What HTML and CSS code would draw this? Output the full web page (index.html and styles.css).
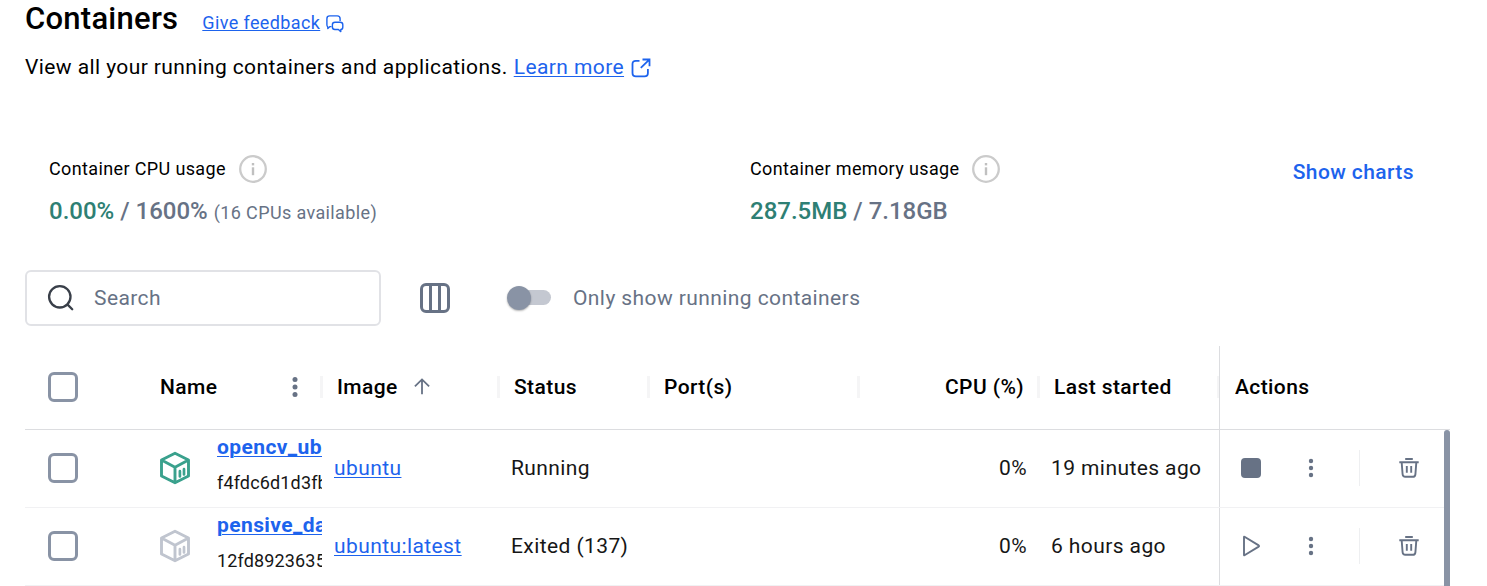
FILE: index.html
```html
<!DOCTYPE html>
<html lang="en">
<head>
<meta charset="utf-8">
<title>Containers</title>
<link rel="stylesheet" href="styles.css">
</head>
<body>
<svg class="sprite" aria-hidden="true">
  <symbol id="info" viewBox="0 0 28 28"><circle cx="14" cy="14" r="12.8" fill="none" stroke="#cbcbcb" stroke-width="2.3"/><rect x="12.8" y="12.3" width="2.4" height="7.9" fill="#c0c0c0"/><rect x="12.8" y="8" width="2.4" height="2.4" fill="#c0c0c0"/></symbol>
  <symbol id="cube" viewBox="0 0 32 34"><path d="M16 2.2 29.5 9v16L16 31.8 2.5 25V9zM2.5 9 16 16.2 29.5 9M16 16.2v15.6" fill="none" stroke="currentColor" stroke-width="2.9" stroke-linejoin="round"/><path d="M20.9 20.2v5.2M25 18.2v5.2" fill="none" stroke="currentColor" stroke-width="2.7" stroke-linecap="round"/></symbol>
  <symbol id="dots" viewBox="0 0 6 20"><circle cx="3" cy="3" r="2.2"/><circle cx="3" cy="10" r="2.2"/><circle cx="3" cy="17" r="2.2"/></symbol>
  <symbol id="trash" viewBox="0 0 20 20"><path d="M6.2 1h7.6M.3 4.2h19.4M2.7 4.6l.9 11.7q.2 2.5 2.7 2.5h7.4q2.5 0 2.7-2.5l.9-11.7M7.8 8v6.8M12.2 8v6.8" fill="none" stroke="currentColor" stroke-width="1.9"/></symbol>
</svg>
<main class="page">
  <header class="title-row">
    <h1 class="title">Containers</h1>
    <a class="link feedback">Give feedback</a>
    <svg class="feedback-icon" width="18" height="18" viewBox="0 0 18 18" fill="none" stroke="#1d63ed" stroke-width="1.4" stroke-linejoin="round"><path d="M5.5 11.6H4l-2.2 2V12A3 3 0 0 1 .9 9.6V3.7Q.9.9 3.7.9h7.6q2.8 0 2.8 2.8V6"/><path d="M9 7.2h5.2q2.6 0 2.6 2.5v2.2q0 2.5-2 2.5v2.2l-2.4-2.1H8.9q-2.5 0-2.5-2.5V9.7q0-2.5 2.6-2.5z"/></svg>
  </header>
  <p class="intro"><span>View all your running containers and applications.</span><a class="link">Learn more</a><svg width="20" height="20" viewBox="0 0 20 20" fill="none" stroke="#1d63ed" stroke-width="1.8"><path d="M8.5 2.8H4.8Q1.5 2.8 1.5 6v9q0 3.4 3.4 3.4h8.6q3.4 0 3.4-3.4v-4M11.5 1.5h7v6.8M18.3 1.7 9.8 9.8"/></svg></p>

  <section class="stats">
    <div class="stat">
      <div class="stat-label">Container CPU usage<svg width="28" height="28"><use href="#info"/></svg></div>
      <div class="stat-value"><span class="used">0.00%</span> / 1600% <small>(16 CPUs available)</small></div>
    </div>
    <div class="stat">
      <div class="stat-label">Container memory usage<svg width="28" height="28"><use href="#info"/></svg></div>
      <div class="stat-value"><span class="used">287.5MB</span> / 7.18GB</div>
    </div>
    <a class="charts">Show charts</a>
  </section>

  <section class="toolbar">
    <div class="search">
      <svg width="28" height="28" viewBox="0 0 28 28" fill="none" stroke="#393f49" stroke-width="2.3" stroke-linecap="round"><circle cx="12.8" cy="12.8" r="10.7"/><path d="m20.6 20.6 4.6 4.6"/></svg>
      <span>Search</span>
    </div>
    <svg class="columns" width="30" height="30" viewBox="0 0 30 30" fill="none" stroke="#677285" stroke-width="3"><rect x="1.5" y="1.5" width="27" height="27" rx="4.5"/><path d="M10.5 2v26M19.5 2v26"/></svg>
    <span class="switch"><span class="thumb"></span></span>
    <span class="switch-label">Only show running containers</span>
  </section>

  <section class="table">
    <div class="row head">
      <div class="check"><span class="box"></span></div>
      <div class="cell name-head">Name<svg class="dots" width="6" height="20" viewBox="0 0 6 20"><circle cx="3" cy="2.5" r="2.5"/><circle cx="3" cy="10" r="2.5"/><circle cx="3" cy="17.5" r="2.5"/></svg></div>
      <div class="cell">Image<svg class="sort" width="16" height="17" viewBox="0 0 16 17" fill="none" stroke="#677285" stroke-width="1.8"><path d="M8 16.3V1.5M.9 8.4 8 1.4l7.1 7"/></svg></div>
      <div class="cell">Status</div>
      <div class="cell">Port(s)</div>
      <div class="cell right">CPU (%)</div>
      <div class="cell">Last started</div>
      <div class="cell pinned">Actions</div>
    </div>
    <div class="body">
      <div class="row">
        <div class="check"><span class="box"></span></div>
        <div class="name"><svg class="cube running" width="32" height="34"><use href="#cube"/></svg><div class="ident"><a class="link strong">opencv_ubuntu</a><span class="hash">f4fdc6d1d3fb</span></div></div>
        <div class="cell"><a class="link">ubuntu</a></div>
        <div class="cell">Running</div>
        <div class="cell"></div>
        <div class="cell right">0%</div>
        <div class="cell">19 minutes ago</div>
        <div class="pinned actions">
          <span class="act"><span class="stop"></span></span>
          <span class="act more"><svg width="6" height="20"><use href="#dots"/></svg></span>
          <span class="act last"><svg width="20" height="20"><use href="#trash"/></svg></span>
        </div>
      </div>
      <div class="row">
        <div class="check"><span class="box"></span></div>
        <div class="name"><svg class="cube" width="32" height="34"><use href="#cube"/></svg><div class="ident"><a class="link strong">pensive_darwin</a><span class="hash">12fd89236355</span></div></div>
        <div class="cell"><a class="link">ubuntu:latest</a></div>
        <div class="cell">Exited (137)</div>
        <div class="cell"></div>
        <div class="cell right">0%</div>
        <div class="cell">6 hours ago</div>
        <div class="pinned actions">
          <span class="act"><svg width="20" height="22" viewBox="0 0 20 22" fill="none" stroke="currentColor" stroke-width="1.9" stroke-linejoin="round"><path d="M3 1.9v18.2q0 .5.5.2L17.7 11.6q.8-.6 0-1.2L3.5 1.7Q3 1.4 3 1.9z"/></svg></span>
          <span class="act more"><svg width="6" height="20"><use href="#dots"/></svg></span>
          <span class="act last"><svg width="20" height="20"><use href="#trash"/></svg></span>
        </div>
      </div>
      <div class="scrollbar"></div>
    </div>
  </section>
</main>
</body>
</html>
```
FILE: styles.css
```css
* { box-sizing: border-box; }
body {
  margin: 0;
  height: 586px;
  overflow: hidden;
  background: #fff;
  color: #000;
  font: 400 21px/28px Roboto, sans-serif;
  letter-spacing: 0.41px;
}
svg { display: block; flex: none; }
.sprite { display: none; }
.page { padding: 0 37px 0 25px; }
.link {
  color: #1d63ed;
  text-decoration: underline;
  text-decoration-thickness: 1px;
  text-underline-offset: 2px;
}

.title-row { display: flex; align-items: baseline; height: 53px; }
.title { margin: 0; font-size: 31px; font-weight: 500; line-height: 37px; letter-spacing: 0.25px; }
.feedback { margin-left: 24px; font-size: 18px; letter-spacing: 0.38px; text-underline-offset: 1px; }
.feedback-icon { align-self: flex-start; margin: 15px 0 0 6px; }
.intro { display: flex; margin: 0; height: 101px; }
.intro .link { margin-left: 6px; }
.intro svg { margin: 5px 0 0 7px; }

.stats { display: flex; height: 116px; padding: 0 36px 0 24px; }
.stat { width: 701px; }
.stat-label { display: flex; align-items: center; gap: 13px; height: 30px; font-size: 18px; letter-spacing: 0.37px; }
.stat-value { height: 28px; margin-top: 13px; color: #677285; font-size: 24px; font-weight: 500; letter-spacing: 0; white-space: nowrap; }
.stat-value small { font-size: 18px; font-weight: 400; letter-spacing: 0.37px; }
.used { color: #2e7f74; }
.charts { margin: 4px 0 0 auto; color: #1d63ed; font-weight: 500; white-space: nowrap; }
.stat + .stat { width: auto; }

.toolbar { display: flex; align-items: center; height: 56px; color: #677285; }
.search { display: flex; align-items: center; gap: 19px; width: 356px; height: 56px; padding-left: 20px; border: 2px solid #e1e2e6; border-radius: 6px; }
.columns { margin-left: 39px; }
.switch { position: relative; width: 43px; height: 15px; margin: -1px 0 0 58px; border-radius: 8px; background: #c4c8d1; }
.thumb { position: absolute; left: -1px; top: -4px; width: 24px; height: 24px; border-radius: 50%; background: #8993a5; box-shadow: 0 1px 2px rgba(0, 0, 0, 0.3); }
.switch-label { margin-left: 22px; }

.table { margin-top: 20px; }
.row {
  display: grid;
  grid-template-columns: 120px 177px 177px 150px 210px 180px 180px 231px;
  height: 78px;
  border-bottom: 1px solid #f1f1f3;
}
.row > div { display: flex; align-items: center; padding-bottom: 2px; }
.row > .check { padding-left: 23px; }
.box { width: 30px; height: 30px; border: 3px solid #8993a5; border-radius: 6px; }
.row > .cell { padding: 0 12px 2px; white-space: nowrap; color: #161616; }
.row > .right { justify-content: flex-end; }

.head { height: 84px; border-bottom-color: #dcdde0; font-weight: 500; }
.head > .cell { padding: 0 15px 2px; color: #000; }
.head > .cell:not(.pinned) {
  position: relative;
}
.head > .cell:not(.pinned)::after {
  content: "";
  position: absolute;
  right: -1px;
  top: 30px;
  width: 3px;
  height: 22px;
  background: #f5f5f6;
}
.head .dots { margin-left: auto; fill: #677285; }
.head > .name-head { padding-right: 24px; }
.sort { margin-left: 16px; }
.row .pinned { border-left: 1px solid #dcdde0; z-index: 1; background: #fff; }

.body { position: relative; }
.row > .name { padding-left: 14px; overflow: hidden; }
.cube { color: #c0c5cf; }
.running { color: #3aa18d; }
.ident { display: flex; flex-direction: column; width: 105px; height: 76px; margin-left: 26px; overflow: hidden; }
.strong { height: 35px; line-height: 34px; font-weight: 700; }
.hash { height: 34px; line-height: 35px; font-size: 18px; letter-spacing: 0.15px; color: #161616; }
.actions { color: #677285; fill: #677285; }
.act { display: flex; flex: none; align-items: center; justify-content: center; width: 62px; height: 36px; }
.act.more { width: 58px; }
.act.last { width: 98px; margin-left: 19px; border-left: 1px solid #eeeff1; }
.stop { width: 20px; height: 20px; border-radius: 4px; background: #677285; }
.scrollbar { position: absolute; z-index: 2; top: 0; left: 1419px; width: 6px; height: 160px; border-radius: 3px 3px 0 0; background: #8993a5; }
```
